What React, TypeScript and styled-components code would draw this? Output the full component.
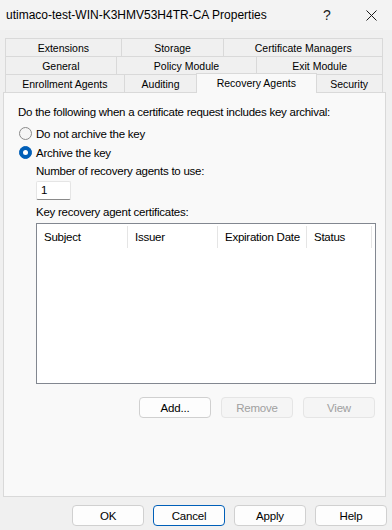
import React from "react";
import styled, { createGlobalStyle } from "styled-components";

const GlobalStyle = createGlobalStyle`
  html, body {
    margin: 0;
    padding: 0;
    background: #f0f0f0;
  }
  body {
    font-family: "Liberation Sans", Arial, sans-serif;
    color: #000;
  }
`;

const Window = styled.div`
  width: 392px;
  height: 530px;
  background: #f0f0f0;
  display: flex;
  flex-direction: column;
  overflow: hidden;
`;

const TitleBar = styled.div`
  height: 30px;
  display: flex;
  align-items: center;
  background: #f3f3f3;
`;

const Title = styled.div`
  flex: 1;
  padding-left: 6px;
  font-size: 12px;
  white-space: nowrap;
`;

const CaptionButton = styled.div<{ $w: number }>`
  width: ${(p) => p.$w}px;
  height: 30px;
  display: flex;
  align-items: center;
  justify-content: center;
  font-size: 14px;
  color: #1a1a1a;
`;

const Body = styled.div`
  padding: 8px 6px 0 3px;
  display: flex;
  flex-direction: column;
`;

const TabRow = styled.div`
  display: flex;
  height: 18px;
  margin: 0 3px 0 2px;
  align-items: flex-end;
`;

const Tab = styled.div<{ $w: number; $active?: boolean }>`
  box-sizing: border-box;
  width: ${(p) => p.$w + (p.$active ? 2 : 0)}px;
  height: ${(p) => (p.$active ? 20 : 18)}px;
  margin-left: ${(p) => (p.$active ? -2 : -1)}px;
  margin-right: ${(p) => (p.$active ? -1 : 0)}px;
  margin-bottom: ${(p) => (p.$active ? -1 : 0)}px;
  border: 1px solid #d9d9d9;
  border-bottom: none;
  background: ${(p) => (p.$active ? "#f9f9f9" : "#f0f0f0")};
  font-size: 10.5px;
  display: flex;
  align-items: center;
  justify-content: center;
  padding-bottom: ${(p) => (p.$active ? 2 : 0)}px;
  position: relative;
  z-index: ${(p) => (p.$active ? 2 : 1)};
  white-space: nowrap;

  &:first-child {
    margin-left: ${(p) => (p.$active ? -2 : 0)}px;
  }
`;

const Panel = styled.div`
  box-sizing: border-box;
  height: 405px;
  border: 1px solid #d9d9d9;
  background: #f9f9f9;
  padding: 12px 10px 0 14px;
  display: flex;
  flex-direction: column;
  font-size: 11.5px;
  letter-spacing: -0.25px;
  position: relative;
  z-index: 1;
`;

const Label = styled.div<{ $top?: number }>`
  height: 15px;
  line-height: 15px;
  margin-top: ${(p) => p.$top ?? 0}px;
  white-space: nowrap;
`;

const RadioRow = styled.label`
  display: flex;
  align-items: center;
  height: 19px;
  gap: 4px;
  margin-left: 1px;
`;

const RadioDot = styled.span<{ $checked?: boolean }>`
  box-sizing: border-box;
  width: 13px;
  height: 13px;
  border-radius: 50%;
  border: 1px solid ${(p) => (p.$checked ? "#005fb8" : "#8a8a8a")};
  background: ${(p) => (p.$checked ? "#005fb8" : "#f5f5f5")};
  display: flex;
  align-items: center;
  justify-content: center;

  &::after {
    content: "";
    display: ${(p) => (p.$checked ? "block" : "none")};
    width: 5px;
    height: 5px;
    border-radius: 50%;
    background: #fff;
  }
`;

const Indent = styled.div`
  margin-left: 18px;
  display: flex;
  flex-direction: column;
`;

const NumberBox = styled.div`
  box-sizing: border-box;
  width: 35px;
  height: 19px;
  margin-top: 2px;
  background: #fff;
  border: 1px solid #e5e5e5;
  border-bottom-color: #8a8a8a;
  border-radius: 2px;
  padding-left: 4px;
  line-height: 17px;
`;

const ListBox = styled.div`
  box-sizing: border-box;
  width: 340px;
  height: 161px;
  margin-top: 3px;
  background: #fff;
  border: 1px solid #828790;
`;

const ListHeader = styled.div`
  display: flex;
  height: 26px;
  padding: 2px 0;
  box-sizing: border-box;
`;

const HeaderCell = styled.div<{ $w: number }>`
  box-sizing: border-box;
  width: ${(p) => p.$w}px;
  padding-left: 7px;
  border-right: 1px solid #e5e5e5;
  display: flex;
  align-items: center;
  white-space: nowrap;
`;

const ButtonRow = styled.div<{ $right: number; $gap: number }>`
  display: flex;
  justify-content: flex-end;
  gap: ${(p) => p.$gap}px;
  padding-right: ${(p) => p.$right}px;
`;

const Button = styled.button<{ $disabled?: boolean; $focused?: boolean; $w?: number }>`
  box-sizing: border-box;
  width: ${(p) => p.$w ?? 72}px;
  height: 21px;
  border-radius: 4px;
  border: 1px solid ${(p) => (p.$focused ? "#005fb8" : p.$disabled ? "#e5e5e5" : "#d0d0d0")};
  background: ${(p) => (p.$disabled ? "#f5f5f5" : "#fdfdfd")};
  color: ${(p) => (p.$disabled ? "#a0a0a0" : "#000")};
  font-family: "Liberation Sans", Arial, sans-serif;
  font-size: 11.5px;
  letter-spacing: -0.2px;
  padding: 0;
`;

const Footer = styled.div`
  margin-top: 8px;
`;

const CloseIcon = () => (
  <svg width="11" height="11" viewBox="0 0 11 11">
    <path d="M0.5 0.5 L10.5 10.5 M10.5 0.5 L0.5 10.5" stroke="#1a1a1a" strokeWidth="1" fill="none" />
  </svg>
);

const App: React.FC = () => {
  return (
    <>
      <GlobalStyle />
      <Window>
        <TitleBar>
          <Title>utimaco-test-WIN-K3HMV53H4TR-CA Properties</Title>
          <CaptionButton $w={46}>?</CaptionButton>
          <CaptionButton $w={42}>
            <CloseIcon />
          </CaptionButton>
        </TitleBar>
        <Body>
          <TabRow>
            <Tab $w={117}>Extensions</Tab>
            <Tab $w={104}>Storage</Tab>
            <Tab $w={160}>Certificate Managers</Tab>
          </TabRow>
          <TabRow>
            <Tab $w={112}>General</Tab>
            <Tab $w={142}>Policy Module</Tab>
            <Tab $w={127}>Exit Module</Tab>
          </TabRow>
          <TabRow>
            <Tab $w={120}>Enrollment Agents</Tab>
            <Tab $w={74}>Auditing</Tab>
            <Tab $w={120} $active>
              Recovery Agents
            </Tab>
            <Tab $w={68}>Security</Tab>
          </TabRow>
          <Panel>
            <Label>Do the following when a certificate request includes key archival:</Label>
            <div style={{ height: 4 }} />
            <RadioRow>
              <RadioDot />
              Do not archive the key
            </RadioRow>
            <RadioRow>
              <RadioDot $checked />
              Archive the key
            </RadioRow>
            <Indent>
              <Label $top={2}>Number of recovery agents to use:</Label>
              <NumberBox>1</NumberBox>
              <Label $top={5}>Key recovery agent certificates:</Label>
              <ListBox>
                <ListHeader>
                  <HeaderCell $w={91}>Subject</HeaderCell>
                  <HeaderCell $w={90}>Issuer</HeaderCell>
                  <HeaderCell $w={89}>Expiration Date</HeaderCell>
                  <HeaderCell $w={65}>Status</HeaderCell>
                </ListHeader>
              </ListBox>
            </Indent>
            <div style={{ height: 13 }} />
            <ButtonRow $right={0} $gap={10} style={{ width: 357 }}>
              <Button>Add...</Button>
              <Button $disabled>Remove</Button>
              <Button $disabled>View</Button>
            </ButtonRow>
          </Panel>
        </Body>
        <Footer>
          <ButtonRow $right={5} $gap={9}>
            <Button>OK</Button>
            <Button $focused>Cancel</Button>
            <Button>Apply</Button>
            <Button>Help</Button>
          </ButtonRow>
        </Footer>
      </Window>
    </>
  );
};

export default App;
